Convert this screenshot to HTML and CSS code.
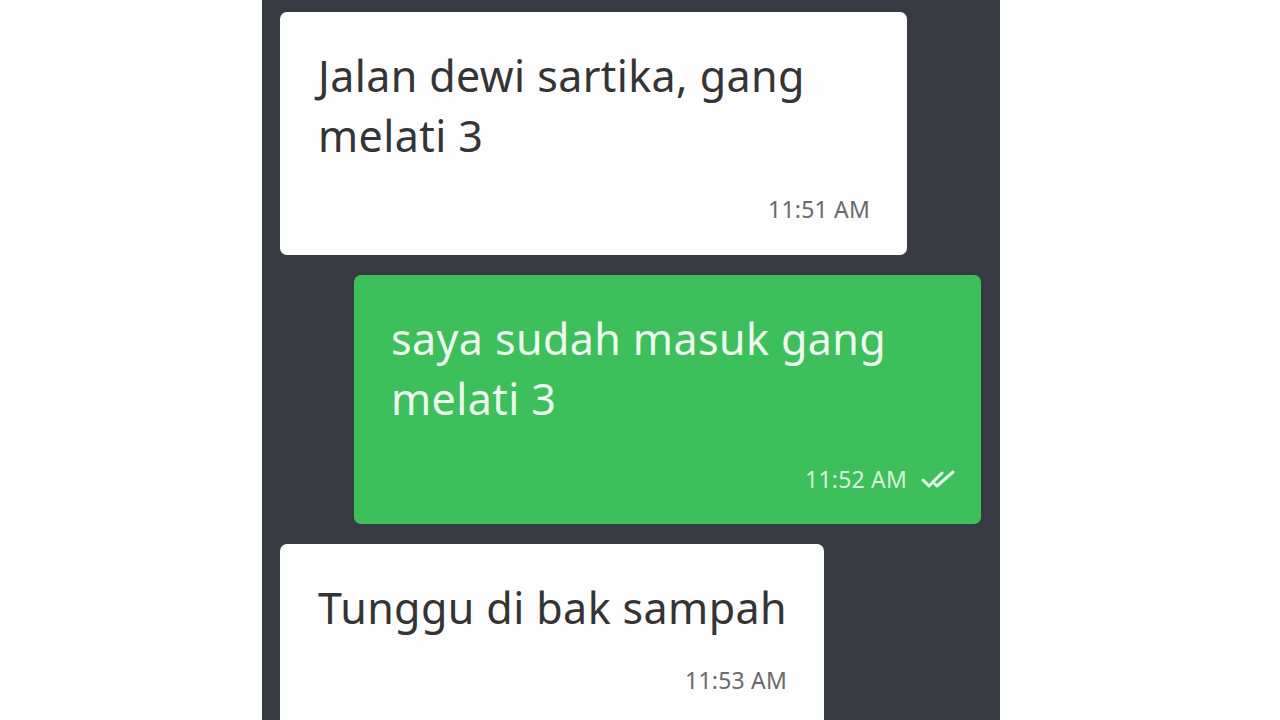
FILE: index.html
```html
<!DOCTYPE html>
<html lang="id">
<head>
<meta charset="utf-8">
<title>Chat</title>
<link rel="stylesheet" href="styles.css">
</head>
<body>
<div class="page">
  <div class="chat">
    <div class="bubble in">
      <div class="msg">Jalan dewi sartika, gang melati 3</div>
      <div class="meta"><span class="time">11:51 AM</span></div>
    </div>
    <div class="bubble out">
      <div class="msg">saya sudah masuk gang melati 3</div>
      <div class="meta"><span class="time">11:52 AM</span>
        <svg class="ticks" width="38" height="20" viewBox="0 0 38 20" aria-hidden="true">
          <path d="M3 11 L9 17 L22 4" fill="none" stroke="currentColor" stroke-width="3" stroke-linecap="round" stroke-linejoin="round"/>
          <path d="M15 15 L17 17 L33 3" fill="none" stroke="currentColor" stroke-width="3" stroke-linecap="round" stroke-linejoin="round"/>
        </svg>
      </div>
    </div>
    <div class="bubble in short">
      <div class="msg">Tunggu di bak sampah</div>
      <div class="meta"><span class="time">11:53 AM</span></div>
    </div>
  </div>
</div>
</body>
</html>
```
FILE: styles.css
```css
html, body {
  margin: 0;
  padding: 0;
  background: #ffffff;
}
body {
  font-family: "Noto Sans", "DejaVu Sans", sans-serif;
}
.page {
  width: 1280px;
  height: 720px;
  display: flex;
  overflow: hidden;
}
.chat {
  margin-left: 262px;
  width: 738px;
  height: 720px;
  box-sizing: border-box;
  background: #383a42;
  padding: 12px 19px 0 18px;
  display: flex;
  flex-direction: column;
  align-items: flex-start;
  gap: 20px;
  overflow: hidden;
}
.bubble {
  box-sizing: border-box;
  max-width: 627px;
  border-radius: 7px;
  padding: 34px 37px 31px 38px;
  flex-shrink: 0;
}
.bubble.in {
  width: 627px;
  background: #fdfdfd;
  color: #343434;
}
.bubble.in.short {
  width: auto;
}
.bubble.out {
  width: 627px;
  align-self: flex-end;
  background: #3dbf5b;
  color: #eef9f0;
  padding-left: 37px;
  padding-bottom: 30px;
}
.msg {
  font-size: 43px;
  line-height: 60px;
  letter-spacing: 0.4px;
}
.meta {
  display: flex;
  justify-content: flex-end;
  align-items: center;
  gap: 13px;
  margin-top: 28px;
  height: 30px;
}
.bubble.in.short .meta {
  margin-top: 27px;
}
.bubble.out .meta {
  margin-top: 35px;
  margin-right: -14px;
}
.time {
  font-size: 23px;
  line-height: 30px;
  color: #6a6a6a;
  letter-spacing: 0.2px;
}
.bubble.out .time {
  color: #d6f3db;
}
.ticks {
  color: #e9f8ec;
  display: block;
}
```
